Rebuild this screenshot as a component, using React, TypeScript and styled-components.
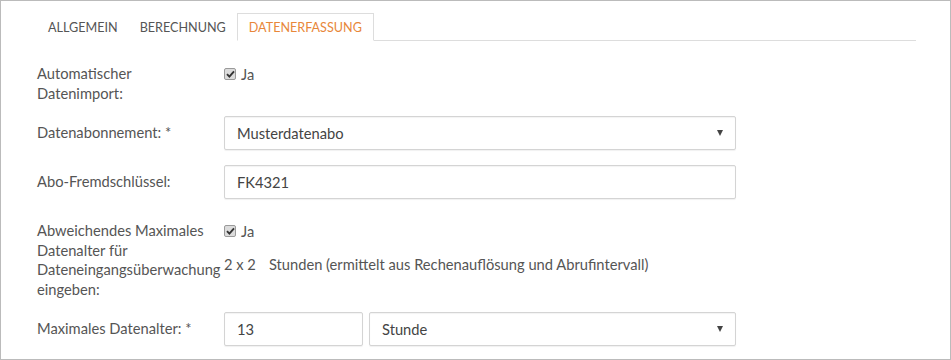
import { FunctionComponent } from "react";
import styled, { createGlobalStyle } from "styled-components";

const GlobalStyle = createGlobalStyle`
  html, body {
    margin: 0;
    padding: 0;
    background: #fff;
  }
  body {
    font-family: Lato, "Liberation Sans", sans-serif;
    font-size: 14.7px;
    color: #555;
  }
`;

const Frame = styled.div`
  box-sizing: border-box;
  width: 951px;
  height: 360px;
  border: 1px solid #bbb;
  padding: 12px 34px 0 36px;
  overflow: hidden;
`;

const TabBar = styled.ul`
  display: flex;
  list-style: none;
  margin: 0;
  padding: 0;
  border-bottom: 1px solid #ddd;
`;

const Tab = styled.li<{ $active?: boolean }>`
  box-sizing: border-box;
  height: 28px;
  margin-bottom: -1px;
  padding: 0 ${(p) => (p.$active ? 11 : 10)}px;
  display: flex;
  align-items: center;
  font-size: 12.6px;
  text-transform: uppercase;
  color: ${(p) => (p.$active ? "#e8873a" : "#555")};
  background: #fff;
  border: 1px solid ${(p) => (p.$active ? "#ddd" : "transparent")};
  border-bottom-color: ${(p) => (p.$active ? "#fff" : "transparent")};
`;

const Form = styled.div`
  padding-top: 23px;
  width: 700px;
`;

const Row = styled.div<{ $gap: number }>`
  display: grid;
  grid-template-columns: 187px 512px;
  align-items: start;
  margin-bottom: ${(p) => p.$gap}px;
`;

const Label = styled.div<{ $pad?: number }>`
  line-height: 19.6px;
  padding-top: ${(p) => p.$pad ?? 0}px;
  color: #555;
`;

const Control = styled.div`
  display: flex;
  flex-direction: column;
`;

const CheckLine = styled.div`
  display: flex;
  align-items: center;
  height: 19.6px;
  gap: 5px;
  color: #555;
`;

const Box = styled.span`
  box-sizing: border-box;
  width: 12px;
  height: 12px;
  border: 1px solid #9a9a9a;
  border-radius: 2px;
  background: #dcdcdc;
  display: flex;
  align-items: center;
  justify-content: center;
`;

const Hint = styled.div`
  margin-top: 13px;
  line-height: 20px;
  color: #555;
`;

const Factor = styled.span`
  margin-right: 13px;
`;

const Field = styled.div<{ $width?: number }>`
  box-sizing: border-box;
  height: 34px;
  width: ${(p) => (p.$width ? `${p.$width}px` : "100%")};
  flex: ${(p) => (p.$width ? "none" : "1")};
  border: 1px solid #d4d4d4;
  border-radius: 2px;
  box-shadow: inset 0 1px 1px rgba(0, 0, 0, 0.05), 0 1px 1px rgba(0, 0, 0, 0.06);
  padding: 0 12px;
  display: flex;
  align-items: center;
  justify-content: space-between;
  color: #444;
  background: #fff;
`;

const Pair = styled.div`
  display: flex;
  gap: 6px;
`;

const Caret = styled.span`
  width: 0;
  height: 0;
  border-left: 3px solid transparent;
  border-right: 3px solid transparent;
  border-top: 6px solid #444;
`;

const Check: FunctionComponent = () => (
  <Box>
    <svg width="9" height="8" viewBox="0 0 9 8">
      <path d="M1 4.2 L3.4 6.6 L8 1.4" fill="none" stroke="#333" strokeWidth="1.9" />
    </svg>
  </Box>
);

const tabs = [
  { title: "Allgemein" },
  { title: "Berechnung" },
  { title: "Datenerfassung", active: true },
];

const App: FunctionComponent = () => {
  return (
    <>
      <GlobalStyle />
      <Frame>
        <TabBar>
          {tabs.map((t) => (
            <Tab key={t.title} $active={t.active}>
              {t.title}
            </Tab>
          ))}
        </TabBar>
        <Form>
          <Row $gap={13}>
            <Label>
              Automatischer
              <br />
              Datenimport:
            </Label>
            <Control>
              <CheckLine>
                <Check />
                Ja
              </CheckLine>
            </Control>
          </Row>
          <Row $gap={15}>
            <Label $pad={7}>Datenabonnement: *</Label>
            <Field>
              Musterdatenabo
              <Caret />
            </Field>
          </Row>
          <Row $gap={22}>
            <Label $pad={7}>Abo-Fremdschlüssel:</Label>
            <Field>FK4321</Field>
          </Row>
          <Row $gap={12}>
            <Label>
              Abweichendes Maximales Datenalter für Dateneingangsüberwachung eingeben:
            </Label>
            <Control>
              <CheckLine>
                <Check />
                Ja
              </CheckLine>
              <Hint>
                <Factor>2 x 2</Factor>Stunden (ermittelt aus Rechenauflösung und Abrufintervall)
              </Hint>
            </Control>
          </Row>
          <Row $gap={0}>
            <Label $pad={7}>Maximales Datenalter: *</Label>
            <Pair>
              <Field $width={139}>13</Field>
              <Field>
                Stunde
                <Caret />
              </Field>
            </Pair>
          </Row>
        </Form>
      </Frame>
    </>
  );
};

export default App;
